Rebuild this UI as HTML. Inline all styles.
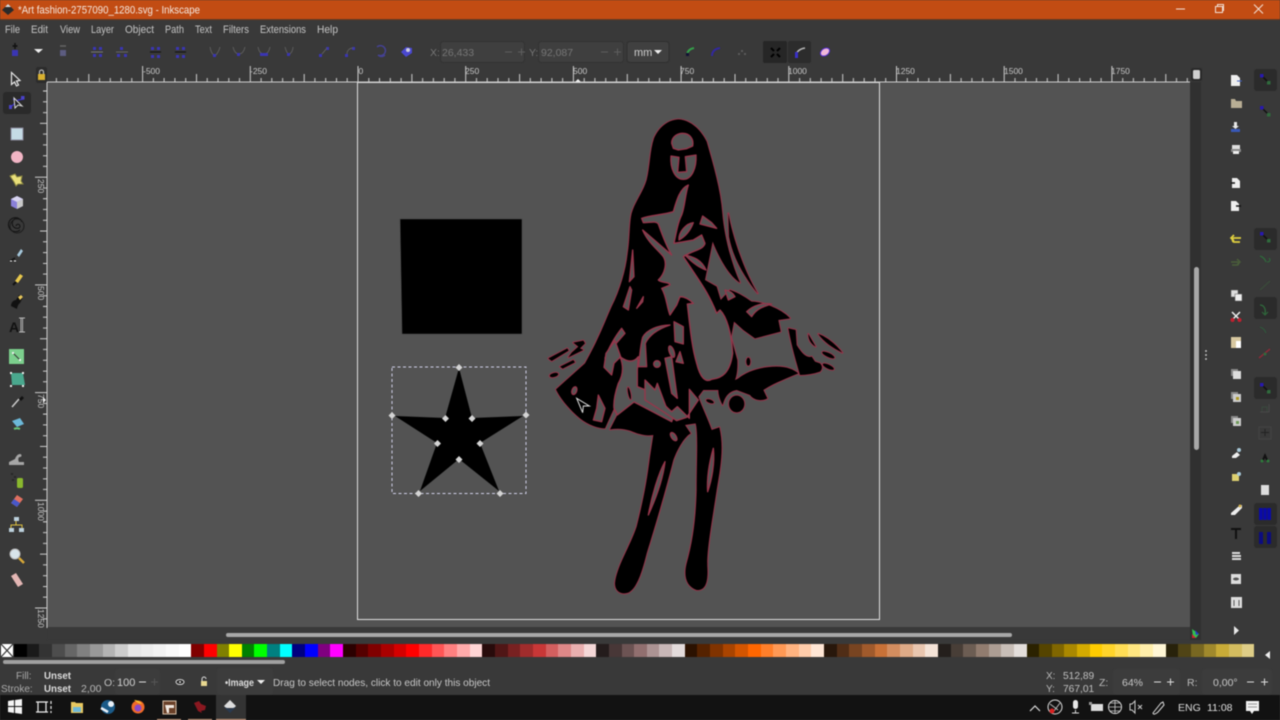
<!DOCTYPE html>
<html><head><meta charset="utf-8"><title>Inkscape</title>
<style>
html,body{margin:0;padding:0;width:1280px;height:720px;overflow:hidden;background:#393939}
#root{position:relative;width:1280px;height:720px;overflow:hidden;filter:blur(.45px)}
svg{position:absolute;left:0;top:0}
text{font-family:"Liberation Sans",sans-serif;font-size:11px;fill:#c8c8c8}
.m text{font-size:11px;fill:#c4c4c4}
.r text{font-size:8.5px;fill:#c8c8c8}
.d text{fill:#767676;font-size:10.5px}
#pal{position:absolute;left:14px;top:644px;width:1241px;height:13px;display:flex}
#pal i{flex:1;display:block}
</style></head><body><div id="root">
<svg width="1280" height="720" viewBox="0 0 1280 720">
<defs>
<pattern id="tx" patternUnits="userSpaceOnUse" x="357.5" y="66" width="107.7" height="16">
<path d="M.5 0V16M11.3 12V16M22 12V16M32.8 12V16M43.6 12V16M54.4 8V16M65.1 12V16M75.9 12V16M86.7 12V16M97.4 12V16" stroke="#cfcfcf" stroke-width="1"/></pattern>
<pattern id="ty" patternUnits="userSpaceOnUse" x="34" y="69" width="13" height="107.7">
<path d="M1 .5H13M9 11.3H13M9 22H13M9 32.8H13M9 43.6H13M6 54.4H13M9 65.1H13M9 75.9H13M9 86.7H13M9 97.4H13" stroke="#cfcfcf" stroke-width="1"/></pattern>
<g id="fig">
<path d="M445 58C410 60 385 85 372 115C360 150 360 200 350 240C340 275 315 305 305 340C298 370 300 420 293 460C288 510 270 570 245 620C225 665 205 720 165 790L78 868C90 895 120 930 150 955C175 975 205 985 225 985L252 925L262 945L240 988C260 985 280 985 300 992C330 1005 355 1008 370 1005L360 1070C350 1150 340 1200 320 1280C300 1340 260 1400 255 1450C255 1475 275 1485 295 1478C320 1465 335 1420 350 1360C375 1280 410 1160 430 1080C445 1040 465 1010 482 1000L465 975L497 970C505 1000 500 1080 500 1170C498 1250 490 1320 470 1390C460 1430 470 1460 500 1470C525 1472 535 1450 532 1400C530 1350 545 1270 560 1170C572 1100 582 1040 568 982L545 990C535 960 515 920 505 890L520 870L565 870L600 860C615 850 624 825 622 780L603 712L612 665L640 690L675 715L752 695L745 660L780 655C760 630 700 605 665 605C650 595 630 580 600 570L572 600L560 560L525 540L548 425C570 480 600 530 630 548C600 480 582 400 577 340C572 270 550 195 530 125C510 85 480 60 445 58Z"/>
<path d="M595 340C605 400 640 510 683 580C650 540 610 480 597 410Z"/>
<path d="M520 845C560 850 600 850 625 835C650 815 690 800 740 800C770 800 790 808 805 820C770 835 730 850 700 870L712 895C695 905 670 900 660 885L620 870C595 875 585 890 578 915C570 900 565 885 565 870L520 870Z"/>
<ellipse cx="620" cy="912" rx="23" ry="25"/>
<ellipse cx="655" cy="785" rx="6" ry="12"/>
<ellipse cx="522" cy="790" rx="6" ry="20" transform="rotate(-15 522 790)"/>
<ellipse cx="540" cy="904" rx="12" ry="5" transform="rotate(20 540 904)"/>
<path d="M775 685L797 690L800 735C815 760 830 775 845 770L855 785L870 790C880 800 875 810 870 815C850 822 830 825 810 825C800 790 785 740 775 685Z"/>
<path d="M865 702C890 710 920 735 937 758C910 745 880 725 865 702ZM835 702L857 740C840 730 835 715 835 702Z"/>
<ellipse cx="895" cy="765" rx="20" ry="6" transform="rotate(25 895 765)"/>
<ellipse cx="895" cy="800" rx="18" ry="6" transform="rotate(25 895 800)"/>
<path d="M55 775L112 745L116 752L65 783Z"/>
<path d="M130 728L160 722L165 730L150 745L160 750L115 772L125 758L145 740Z"/>
<path d="M90 800L130 780L135 787L98 806Z"/>
<ellipse cx="72" cy="825" rx="13" ry="6" transform="rotate(-15 72 825)"/>
</g>
<g id="holes">
<path d="M425 130C425 108 445 100 458 100C480 100 492 118 488 138L470 146L445 150L430 145ZM423 168L447 172L443 217L470 215L466 170L498 165C500 205 485 238 460 238C435 238 420 205 423 168Z"/>
<path d="M475 255C450 265 440 300 430 335C400 345 360 345 335 355L340 368C360 368 378 362 385 372C395 400 410 440 425 465L338 390C355 430 385 450 400 470C412 490 405 520 385 540C395 550 420 545 420 555L395 565C410 590 410 620 420 645L440 615L450 590C465 590 480 600 490 610L472 612C480 680 485 740 500 790C510 830 525 850 545 838C575 835 600 820 608 760C605 700 590 650 570 630L560 640C540 590 520 560 500 530L460 470C490 450 520 450 525 430L515 405L490 420L432 430C440 390 445 365 455 345C465 320 465 285 475 255Z"/>
<path d="M490 368C470 370 445 395 447 420C465 410 480 395 490 368Z"/>
<path d="M518 348L510 372L560 385L545 368Z"/>
<path d="M465 465C490 470 515 480 528 510C500 500 480 480 465 465Z"/>
<path d="M308 450L298 545L312 530Z"/>
<path d="M300 560L280 620L295 630L305 570Z"/>
<path d="M340 590L320 625L338 605Z"/>
<path d="M585 570C600 572 610 580 615 590L595 600Z"/>
<path d="M650 635C670 615 700 608 725 612C700 620 680 625 665 650Z"/>
<path d="M275 685L285 700L250 740L225 775C235 745 255 710 275 685Z"/>
<path d="M338 712C350 690 385 675 420 675C390 685 360 700 346 730L350 800L325 800C330 770 330 740 338 712Z"/>
<path d="M432 665L460 680L460 732L435 725Z"/>
<ellipse cx="425" cy="755" rx="7" ry="18" transform="rotate(-20 425 755)"/>
<path d="M450 755L460 790L438 785Z"/>
<circle cx="381" cy="792" r="10"/>
<path d="M255 722L272 770L252 790L245 825L222 802L228 760Z"/>
<path d="M270 770C282 800 280 825 265 850C255 880 250 905 252 925L262 945L312 906C350 925 385 945 425 965L432 945L372 880L322 860L322 810L325 770C310 790 290 785 270 770Z"/>
<path d="M405 775L425 770L442 895L425 880Z"/>
<path d="M345 840L375 870L382 850L408 920L425 935L442 920L478 955L478 868L505 900L470 952L440 962L400 935L345 900Z"/>
<ellipse cx="133" cy="872" rx="7" ry="12" transform="rotate(20 133 872)"/>
<path d="M205 885L225 925L215 965L190 960L200 925Z"/>
<ellipse cx="431" cy="1010" rx="7" ry="14" transform="rotate(-35 431 1010)"/>
<path d="M405 1085C385 1120 365 1190 355 1245C380 1190 400 1130 405 1085Z"/>
<path d="M550 1045C540 1080 530 1130 533 1175C545 1140 555 1090 550 1045Z"/>
</g>
</defs>

<!-- title bar -->
<rect width="1280" height="19" fill="#c24c13"/>
<rect y="19" width="1280" height="1" fill="#6b3a1e"/>
<path d="M2 10l6-6 6 6-6 5z" fill="#2a2a2a"/><path d="M5 7l3-3 3 3z" fill="#ddd"/>
<text x="18" y="13.5" textLength="182" lengthAdjust="spacingAndGlyphs" style="font-size:11px;fill:#f4e7df">*Art fashion-2757090_1280.svg - Inkscape</text>
<path d="M1176 9h9" stroke="#f2e2d8"/><path d="M1215.500 6.500h7v6h-7zM1217.500 6.500v-2h6v6h-1" fill="none" stroke="#f2e2d8"/><path d="M1254 4.500l9 9m0-9l-9 9" stroke="#f2e2d8"/>

<!-- menu -->
<g class="m">
<text x="5" y="33" textLength="15" lengthAdjust="spacingAndGlyphs">File</text><text x="31" y="33" textLength="17" lengthAdjust="spacingAndGlyphs">Edit</text><text x="60" y="33" textLength="20" lengthAdjust="spacingAndGlyphs">View</text><text x="91" y="33" textLength="23" lengthAdjust="spacingAndGlyphs">Layer</text><text x="125" y="33" textLength="29" lengthAdjust="spacingAndGlyphs">Object</text><text x="165" y="33" textLength="19" lengthAdjust="spacingAndGlyphs">Path</text><text x="195" y="33" textLength="17" lengthAdjust="spacingAndGlyphs">Text</text><text x="223" y="33" textLength="26" lengthAdjust="spacingAndGlyphs">Filters</text><text x="260" y="33" textLength="46" lengthAdjust="spacingAndGlyphs">Extensions</text><text x="317" y="33" textLength="21" lengthAdjust="spacingAndGlyphs">Help</text>
</g>

<!-- node toolbar icons -->
<g fill="#3a35b4" stroke="none">
<rect x="12" y="50" width="6" height="6"/><path d="M15 43v6M12.500 46h5" stroke="#111" stroke-width="1.500"/>
<rect x="60" y="50" width="6" height="6" fill="#5c5c80"/><path d="M60 46h6" stroke="#666" stroke-width="1.500"/>
<path d="M34 49h9l-4.500 4z" fill="#eee"/>
<path d="M93 47h3v3h-3zM99 47h3v3h-3zM93 54h3v3h-3zM99 54h3v3h-3z"/><path d="M91 52h12" stroke="#777"/>
<path d="M120 47h3v3h-3zM117 54h3v3h-3zM124 54h3v3h-3z"/><path d="M116 52h12" stroke="#666"/>
<path d="M151 47h3v3h-3zM157 47h3v3h-3zM151 55h3v3h-3zM157 55h3v3h-3z"/><path d="M150 52h11" stroke="#111"/>
<path d="M176 47h3v3h-3zM182 47h3v3h-3zM176 55h3v3h-3zM182 55h3v3h-3z"/><path d="M175 52h11" stroke="#111"/>
<g fill="none" stroke="#5c5c5c" stroke-width="1"><path d="M210 47c1 6 3 8 5 9c2-2 4-5 5-9M233 47c1 4 3 7 6 7s5-3 6-7M258 47c1 5 3 7 6 7s5-2 6-7M285 47c1 4 2 6 4 8c2-2 4-4 4-8"/></g>
<path d="M213 54h3v3h-3zM237 53h3v3h-3zM260 53h8v3h-8zM287 53h3v3h-3z"/>
<path d="M319 54h3v3h-3zM326 47h3v3h-3zM345 54h3v3h-3zM352 47h3v3h-3z"/>
<path d="M322 54l5-6M347 54c0-4 3-6 6-6" stroke="#5c5c5c" fill="none"/>
<path d="M377 47a5 5 0 1 1 1 8c2 2 5 2 7 0" fill="none" stroke="#454294" stroke-width="1.500"/>
<path d="M401 52l5-5 6 1 0 5-6 4z" fill="#4a48d0"/><circle cx="408" cy="50" r="2" fill="#ccd"/>
</g>

<!-- coord fields -->
<g fill="#3f3f3f" stroke="#333"><rect x="440.500" y="41.500" width="84" height="21" rx="3"/><rect x="538.500" y="41.500" width="85" height="21" rx="3"/></g>
<rect x="627" y="41.500" width="42" height="21" rx="3" fill="#404040" stroke="#303030"/>
<g class="d">
<text x="430" y="56">X:</text><text x="442" y="56">26,433</text><text x="529" y="56">Y:</text><text x="541" y="56">92,087</text>
</g>
<path d="M505 52h7M518 52h7M601 52h7M614 52h7M521.500 48.500v7M617.500 48.500v7" stroke="#5e5e5e"/>
<text x="634" y="56" style="font-size:11px;fill:#d0d0d0">mm</text>
<path d="M654 50h8l-4 4z" fill="#eee"/>
<path d="M687 56c0-4 2-7 7-8" fill="none" stroke="#35a04a" stroke-width="2"/><path d="M686 53h3v3h-3z" fill="#113"/>
<path d="M712 56c0-4 2-7 8-8" fill="none" stroke="#3228a0" stroke-width="2"/>
<path d="M738 53h2v2h-2zM744 53h2v2h-2zM741 50h2v2h-2z" fill="#5c5c5c"/>
<rect x="763" y="41" width="24" height="22" rx="2" fill="#262626"/><rect x="788" y="41" width="23" height="22" rx="2" fill="#2c2c2c"/>
<path d="M771 48l3 3m3 0l3-3m-9 9l3-3m3 0l3 3" stroke="#000" stroke-width="2"/>
<path d="M796 57c0-5 3-8 9-9" fill="none" stroke="#bbb" stroke-width="1.500"/><path d="M795 52h3v6h-3z" fill="#3a30c8"/>
<ellipse cx="825" cy="52" rx="5" ry="3.500" transform="rotate(-35 825 52)" fill="#f0b8d8" stroke="#5830d8"/>

<!-- canvas -->
<rect x="47" y="82" width="1143" height="545" fill="#535353"/>
<rect x="47" y="627" width="1143" height="13" fill="#393939"/>
<rect x="357.500" y="82.500" width="522" height="537" fill="none" stroke="#e0e0e0" stroke-width="1"/>

<!-- rulers -->
<rect x="47" y="66" width="1143" height="16" fill="url(#tx)"/>
<rect x="47" y="81.500" width="1143" height="1" fill="#d0d0d0"/>
<rect x="34" y="82" width="13" height="545" fill="url(#ty)"/>
<rect x="46.500" y="82" width="1" height="546" fill="#cfcfcf"/>
<g class="r">
<text x="143" y="74">-500</text><text x="250" y="74">-250</text><text x="358.500" y="74">0</text><text x="465" y="74">250</text><text x="573" y="74">500</text><text x="680" y="74">750</text><text x="788" y="74">1000</text><text x="896" y="74">1250</text><text x="1004" y="74">1500</text><text x="1111" y="74">1750</text>
<text transform="translate(38 179) rotate(90)">250</text><text transform="translate(38 286) rotate(90)">500</text><text transform="translate(38 394) rotate(90)">750</text><text transform="translate(38 502) rotate(90)">1000</text><text transform="translate(38 609) rotate(90)">1250</text>
</g>
<path d="M575 82l3-3 3 3z" fill="#eee"/><path d="M43 397l3 3-3 3z" fill="#eee"/>

<!-- lock + corner -->
<rect x="36" y="67" width="11" height="16" rx="2" fill="#2c2c2c"/>
<rect x="38" y="74" width="7" height="6" fill="#d8b030"/><path d="M39.500 74v-2a2 2 0 0 1 4 0v2" fill="none" stroke="#bbb" stroke-width="1.200"/>
<rect x="1191" y="68" width="11" height="13" rx="2" fill="#2a2a2a"/><rect x="1193" y="70" width="7" height="9" rx="1.500" fill="#cfcfcf"/>

<!-- black shapes -->
<path d="M400 219L522 219V334H402Z" fill="#000" stroke="#484848" stroke-width=".6"/>
<path d="M459 368L472 418L523 416L480 443L499 491L459 459L420 491L437 443L395 416L445 418Z" fill="#000"/>
<rect x="392" y="367" width="134" height="126.500" fill="none" stroke="#d0d0e8" stroke-width="1" stroke-dasharray="3 2.500"/>
<g fill="#d4d4d4"><path d="M459 364l3.500 3.500-3.500 3.500-3.500-3.500zM392 412l3.500 3.500-3.500 3.500-3.500-3.500zM526 411.500l3.500 3.500-3.500 3.500-3.500-3.500zM418.500 490l3.500 3.500-3.500 3.500-3.500-3.500zM500 490l3.500 3.500-3.500 3.500-3.500-3.500zM445.500 415l3.500 3.500-3.500 3.500-3.500-3.500zM472 415l3.500 3.500-3.500 3.500-3.500-3.500zM437.500 440l3.500 3.500-3.500 3.500-3.500-3.500zM480 440l3.500 3.500-3.500 3.500-3.500-3.500zM459 456l3.500 3.500-3.500 3.500-3.500-3.500z"/></g>

<!-- figure -->
<g transform="translate(530 100) scale(.33333)">
<use href="#fig" fill="#96364b" stroke="#96364b" stroke-width="6" stroke-linejoin="round"/>
<use href="#fig" fill="#000"/>
<use href="#holes" fill="#555" stroke="#96364b" stroke-width="4" stroke-linejoin="round"/>
<ellipse cx="298" cy="880" rx="5" ry="20" transform="rotate(-12 298 880)" fill="#000" stroke="#96364b" stroke-width="3"/>
<path d="M140 895L178 918L160 918L158 938Z" fill="none" stroke="#ddd" stroke-width="3"/>
</g>

<!-- left tools -->
<rect x="3" y="92" width="28" height="22" rx="3" fill="#2a2a2a"/>
<path d="M11.500 72.500v12l3-2.500 2 4 2-1-2-4 3.500-.5z" fill="#333" stroke="#e8e8e8" stroke-width="1.200"/>
<path d="M11 107l7-7 6-1M13 99l3 2" stroke="#3a30d0" stroke-width="1.200" fill="none"/><rect x="9" y="105" width="3" height="4" fill="#4a42c8"/><rect x="21" y="96" width="3.500" height="3.500" fill="#4a42c8"/>
<path d="M14 98l1 10 3-3 4 1z" fill="#222" stroke="#ddd"/>
<rect x="11" y="128" width="12" height="12" fill="#c5dbe5" stroke="#889"/>
<circle cx="17" cy="157" r="6" fill="#f2b5c5"/>
<path d="M10 176l5-2 2 3 5-1-1 5 2 3-5 0-2 2-2-4z" fill="#e9df7a" stroke="#8b8741"/>
<path d="M17 196l6 3v7l-6 3-6-3v-7z" fill="#8a80d8"/><path d="M17 196l6 3-6 3-6-3z" fill="#d8d4f0"/><path d="M17 202l6-3v7l-6 3z" fill="#c9c9c9"/>
<path d="M17 226m-1 0a2 2 0 1 1 3 2a5 5 0 1 1 3-6a7 7 0 1 0-2 8" fill="none" stroke="#111" stroke-width="1"/><circle cx="17" cy="226" r="7" fill="none" stroke="#1c1c1c"/>
<path d="M17 255l4-6 2 2-4 6z" fill="#a5c8dc"/><path d="M10 261l5-3" stroke="#111" stroke-width="1.500"/><path d="M10 261h2M14 261h2" stroke="#fff"/>
<path d="M15 281l5-7 3 2-5 7z" fill="#e8c84c"/><path d="M13 285l3-3" stroke="#111" stroke-width="2"/>
<path d="M11 306c0-4 3-6 5-6l3-5 4 2-3 6c-2 1-3 5-3 6z" fill="#111"/><path d="M18 297l3-2 2 2-3 3z" fill="#e6c65c"/>
<text x="9" y="332" style="font-family:'Liberation Sans';font-size:14px;fill:#111;font-weight:bold">A</text><path d="M21 318h1.500v14H21zM19 318h6M19 332h6" stroke="#bbb" stroke-width="1"/>
<rect x="9" y="349" width="15" height="15" fill="#7ccf8d"/><path d="M13 353l7 7" stroke="#333"/><rect x="12" y="352" width="2" height="2" fill="#eee"/><rect x="19" y="359" width="2" height="2" fill="#eee"/>
<path d="M11 373h12l2 12h-13z" fill="#4aa88e"/><g fill="#eee"><rect x="10" y="372" width="2" height="2"/><rect x="22" y="372" width="2" height="2"/><rect x="10" y="385" width="2" height="2"/><rect x="22" y="385" width="2" height="2"/></g>
<path d="M12 407l7-8" stroke="#ccc" stroke-width="1.500"/><path d="M19 399l3-3 2 2-3 3z" fill="#111"/>
<path d="M12 421l8-3 4 6-7 3z" fill="#6cb8d8"/><path d="M14 429c2-1 4-1 6 0" stroke="#6cc878" stroke-width="2" fill="none"/>
<path d="M9 465v-3l6-3c1-3 3-5 5-5s2 3 0 3-2 3-1 5h5v3z" fill="#a6a6a6"/>
<rect x="17" y="478" width="6" height="10" rx="1.500" fill="#8ab82e"/><path d="M11 474h2M14 477h2M12 480h2" stroke="#222" stroke-width="1.500"/>
<path d="M11 503l6-8 6 4-6 8z" fill="#e07060"/><path d="M11 503l3-4 6 4-3 4z" fill="#4858c8"/>
<g fill="#bcd0dc"><rect x="14" y="517" width="5" height="4"/><rect x="9" y="528" width="5" height="4"/><rect x="19" y="528" width="5" height="4"/></g><path d="M16 521v4h-5v3M16 525h6v3" stroke="#ddc040" fill="none"/>
<circle cx="15" cy="554" r="5" fill="#d8e4ea" stroke="#bbb"/><path d="M19 558l5 5" stroke="#d8a838" stroke-width="2.500"/>
<path d="M11 576l5-3 7 11-5 3z" fill="#e3b6b4"/>

<!-- scrollbars -->
<rect x="1190" y="82" width="11" height="558" fill="#303030"/>
<rect x="1194" y="267" width="5" height="183" rx="2.500" fill="#a8a8a8"/>
<rect x="226" y="633" width="786" height="4" rx="2" fill="#a8a8a8"/>
<circle cx="1206" cy="351" r=".9" fill="#ddd"/><circle cx="1206" cy="355" r=".9" fill="#ddd"/><circle cx="1206" cy="359" r=".9" fill="#ddd"/>
<path d="M1192 629l7 5-3 4-3-1z" fill="#33c050"/><path d="M1192 634l4 4h-4z" fill="#d02030"/><path d="M1195 630l4 4-3 1z" fill="#2838c8"/>

<!-- right col 1 -->
<g>
<path d="M1231 75h6l3 3v8h-9z" fill="#eee"/><path d="M1237 81h5" stroke="#4060c0"/>
<path d="M1231 99h4l1 2h6v7h-11z" fill="#b8ae94"/>
<path d="M1234 122h3v4h2l-3.500 3-3.500-3h2z" fill="#e8e8e8"/><rect x="1231" y="129" width="9" height="3" fill="#3858b8"/>
<rect x="1232" y="145" width="8" height="4" fill="#ddd"/><rect x="1231" y="149" width="10" height="3" fill="#888"/><rect x="1233" y="151" width="6" height="3" fill="#eee"/>
<path d="M1232 178h5l3 3v7h-8z" fill="#eee"/><path d="M1231 183h4" stroke="#111" stroke-width="1.500"/>
<path d="M1231 201h5l3 3v7h-8z" fill="#eee"/><path d="M1236 206h5" stroke="#111" stroke-width="1.500"/>
<path d="M1240 242h-6c-2 0-2-4 0-4h7M1234 235l-3 3 3 3" fill="none" stroke="#e0d040" stroke-width="1.700"/>
<path d="M1232 265h5c2 0 2-3 0-3h-6M1237 259l3 3-3 3" fill="none" stroke="#4a5e3a" stroke-width="1.500"/>
<rect x="1231" y="290" width="7" height="7" fill="#ddd" stroke="#555" stroke-width=".5"/><rect x="1235" y="294" width="7" height="7" fill="#eee" stroke="#555" stroke-width=".5"/>
<path d="M1232 312l7 7M1240 312l-7 7" stroke="#eee" stroke-width="1.500"/><circle cx="1232.500" cy="320" r="2" fill="#c02030"/><circle cx="1239.500" cy="320" r="2" fill="#c02030"/>
<rect x="1231" y="337" width="10" height="11" fill="#d8c8a0"/><rect x="1236" y="341" width="5" height="7" fill="#fff"/>
<rect x="1231" y="369" width="7" height="7" fill="#888"/><rect x="1233" y="371" width="8" height="8" fill="#ddd"/>
<rect x="1231" y="392" width="7" height="7" fill="#888"/><rect x="1233" y="394" width="8" height="8" fill="#ccc"/><rect x="1236" y="397" width="3" height="3" fill="#ae9a28"/>
<rect x="1231" y="416" width="7" height="7" fill="#888"/><rect x="1233" y="418" width="8" height="8" fill="#ccc"/><rect x="1236" y="421" width="3" height="3" fill="#6e9a58"/>
<path d="M1232 456l5-4 3 3-4 3h-4z" fill="#eee"/><circle cx="1239" cy="450" r="2" fill="#a8c8d8"/>
<rect x="1232" y="474" width="7" height="7" fill="#ddd070"/><circle cx="1239" cy="474" r="2" fill="#a8c8d8"/>
<path d="M1231 513l8-7 3-1v3l-7 7h-4z" fill="#eee"/><circle cx="1240" cy="506" r="1.500" fill="#d0b050"/>
<path d="M1231 528h10v2h-4v9h-2v-9h-4z" fill="#111"/>
<g fill="#ddd"><rect x="1232" y="552" width="8" height="2"/><rect x="1232" y="555" width="9" height="2"/><rect x="1232" y="558" width="9" height="2"/></g>
<rect x="1231" y="574" width="10" height="10" fill="#ddd"/><ellipse cx="1236" cy="579" rx="3" ry="1.500" fill="#555"/>
<rect x="1231" y="597" width="11" height="11" fill="#ddd"/><path d="M1234 600v6M1239 600v6" stroke="#555"/>
<path d="M1234 626l5 4.500-5 4.500z" fill="#e8e8e8"/>
</g>

<!-- right col 2 -->
<g fill="#2b2b2b">
<rect x="1254" y="69" width="23" height="22" rx="3"/><rect x="1254" y="228" width="23" height="22" rx="3"/><rect x="1254" y="297" width="23" height="22" rx="3"/><rect x="1254" y="377" width="23" height="22" rx="3"/><rect x="1254" y="503" width="23" height="22" rx="3"/><rect x="1254" y="526" width="23" height="22" rx="3"/>
</g>
<g>
<g id="n"><path d="M1262 76l6 6" stroke="#111" stroke-width="1.500"/><rect x="1260" y="74" width="3.500" height="3.500" fill="#2818b0"/><rect x="1267" y="81" width="3.500" height="3.500" fill="#2f6a3c"/></g>
<use href="#n" y="32"/><use href="#n" y="158"/><use href="#n" y="309"/>
<path d="M1260 256c3 1 5 3 6 6" fill="none" stroke="#2f6a3c" stroke-width="1.300"/><path d="M1267 262c3 0 4-2 2-4" fill="none" stroke="#2f6a3c"/>
<path d="M1260 290l10-9" stroke="#3a4a3a" stroke-width="1.500"/>
<path d="M1260 305c4 0 6 4 5 9" fill="none" stroke="#2f6a3c" stroke-width="1.300"/><path d="M1262 312l3 3 3-3" fill="none" stroke="#2f6a3c"/>
<path d="M1260 327c3 1 5 3 6 6" fill="none" stroke="#2f5a3c"/>
<path d="M1259 358l11-9" stroke="#8a2a38" stroke-width="1.500"/><circle cx="1265" cy="354" r="1.500" fill="#2f6a3c"/>
<rect x="1262" y="407" width="5" height="5" fill="none" stroke="#3a4a3e"/><path d="M1260 412h9v-8" fill="none" stroke="#484848"/>
<path d="M1265 429v7M1261 432.500h8" stroke="#222"/><rect x="1259" y="427" width="12" height="12" fill="none" stroke="#444"/>
<path d="M1261 462l4-9 4 9h-2l-2-4-2 4z" fill="#111"/><circle cx="1262" cy="461" r="1.500" fill="#2f7a3c"/><circle cx="1268" cy="461" r="1.500" fill="#2f7a3c"/>
<rect x="1261" y="485" width="8" height="10" fill="#ddd"/>
<rect x="1259" y="508" width="12" height="12" fill="#0a0aa8"/><path d="M1263 508v12M1267 508v12" stroke="#181870"/>
<path d="M1259 532h4v12h-4zM1267 532h4v12h-4z" fill="#0c0c80"/>
</g>

<!-- palette cross + arrow -->
<rect x="1" y="644" width="12" height="13" fill="#fff"/>
<path d="M1 644l12 13m0-13l-12 13" stroke="#333" stroke-width="1.200"/>
<path d="M1270 651v8l-5-4z" fill="#eee"/>
<rect x="3" y="660" width="282" height="4" rx="2" fill="#a0a0a0"/>

<!-- status bar -->
<text x="16" y="679" style="font-size:10px;fill:#aaa">Fill:</text>
<text x="1" y="692" style="font-size:10px;fill:#aaa">Stroke:</text>
<text x="44" y="679" textLength="27" lengthAdjust="spacingAndGlyphs" style="font-size:10.500px;font-weight:bold;fill:#ddd">Unset</text>
<text x="44" y="692" textLength="27" lengthAdjust="spacingAndGlyphs" style="font-size:10.500px;font-weight:bold;fill:#ddd">Unset</text>
<text x="81" y="692" style="font-size:10.500px;fill:#b8b8b8">2,00</text>
<rect x="115" y="669" width="45" height="26" rx="3" fill="#3c3c3c"/>
<text x="104" y="686" style="font-size:10.500px;fill:#c0c0c0">O:</text>
<text x="117" y="686" style="font-size:11px;fill:#d0d0d0">100</text>
<path d="M139 682h7" stroke="#ddd"/><path d="M151 682h7M154.500 678.500v7" stroke="#555"/>
<ellipse cx="180" cy="682" rx="4" ry="2.500" fill="#222" stroke="#ddd"/><circle cx="180" cy="682" r="1" fill="#ddd"/>
<rect x="201" y="681" width="6" height="5" fill="#e8d890"/><path d="M202 681v-2a2 2 0 0 1 4 0" fill="none" stroke="#ddd"/>
<rect x="217" y="668" width="56" height="27" rx="3" fill="#3c3c3c"/>
<text x="225" y="686" textLength="29" lengthAdjust="spacingAndGlyphs" style="font-size:10px;font-weight:bold;fill:#ddd">•Image</text>
<path d="M257 680h8l-4 4z" fill="#eee"/>
<text x="273" y="686" textLength="217" lengthAdjust="spacingAndGlyphs" style="font-size:10.500px;fill:#c8c8c8">Drag to select nodes, click to edit only this object</text>

<text x="1046" y="679" style="font-size:10px;fill:#b8b8b8">X:</text><text x="1046" y="692" style="font-size:10px;fill:#b8b8b8">Y:</text>
<text x="1063" y="679" style="font-size:10.200px;fill:#c0c0c0">512,89</text><text x="1063" y="692" style="font-size:10.200px;fill:#c0c0c0">767,01</text>
<text x="1099" y="686" style="font-size:10.500px;fill:#bbb">Z:</text>
<rect x="1113" y="669" width="67" height="26" rx="3" fill="#3c3c3c"/>
<text x="1122" y="686" style="font-size:10.500px;fill:#c8c8c8">64%</text>
<path d="M1154 682h7M1167 682h7M1170.500 678.500v7" stroke="#ddd"/>
<text x="1187" y="686" style="font-size:10.500px;fill:#bbb">R:</text>
<rect x="1202" y="669" width="70" height="26" rx="3" fill="#3c3c3c"/>
<text x="1213" y="686" style="font-size:10.500px;fill:#c8c8c8">0,00°</text>
<path d="M1247 682h7M1261 682h7M1264.500 678.500v7" stroke="#ddd"/>

<!-- taskbar -->
<rect y="695" width="1280" height="25" fill="#121212"/>
<rect x="216" y="695" width="30" height="25" fill="#333"/>
<rect x="157" y="719" width="24" height="1" fill="#d8a888"/><rect x="188" y="719" width="24" height="1" fill="#d8a888"/><rect x="216" y="719" width="30" height="1" fill="#e0a888"/>
<path d="M8 701l6-1v6H8zM15 700l7-1v7h-7zM8 707h6v6l-6-1zM15 707h7v7l-7-1z" fill="#f4f4f4"/>
<path d="M38 702h8v10h-8zM36 702h12M36 712h12M51 701v3M51 706v3M51 711v2" fill="none" stroke="#eee" stroke-width="1.200"/>
<path d="M71 702h4l1 1h7v10H71z" fill="#e8c860"/><rect x="73" y="707" width="8" height="5" fill="#6eb8d8"/>
<circle cx="108" cy="707" r="7" fill="#1a5a88"/><circle cx="111" cy="704" r="3" fill="#e8f0f8"/><path d="M101 708l7 4" stroke="#e8f0f8" stroke-width="2.500"/>
<circle cx="138" cy="707" r="6.500" fill="#f06a28"/><circle cx="138" cy="708" r="3.500" fill="#8a4ac8"/><path d="M134 700c3 0 6 1 8 4l-4-1z" fill="#f8c030"/>
<rect x="163" y="701" width="13" height="13" fill="#6a4028" stroke="#d8c0a8"/><path d="M165 705h9v3h-5v5h-2z" fill="#f0e8e0"/>
<path d="M194 703l5-2 2 3 5 2-1 4-4 1 1 2-4-2-2-4z" fill="#8a1820"/>
<path d="M230 700l6 6-2 2h-8l-2-2z" fill="#ddd"/><path d="M224 707l6 6 6-6-6 2z" fill="#2a3a50"/>

<path d="M1030 711l5-5 5 5" fill="none" stroke="#ddd" stroke-width="1.200"/>
<circle cx="1055" cy="707" r="7" fill="none" stroke="#ddd"/><path d="M1050 704l8 6M1060 703l-6 8" stroke="#bbb"/><circle cx="1052" cy="711" r="2.500" fill="#d82020"/>
<rect x="1073" y="700" width="5" height="9" rx="2.500" fill="#e8e8e8"/><path d="M1075.500 710v3M1072 713h7" stroke="#ddd"/>
<rect x="1091" y="704" width="12" height="7" fill="#ddd"/><rect x="1089" y="702" width="3" height="3" fill="#999"/>
<circle cx="1115" cy="707" r="6.500" fill="none" stroke="#ddd"/><path d="M1108.500 707h13M1115 700.500v13M1110 703h10M1110 711h10" stroke="#ccc" stroke-width=".8"/>
<path d="M1130 704h2l3-3v12l-3-3h-2zM1138 705l4 4m0-4l-4 4" fill="none" stroke="#ccc"/>
<path d="M1153 713l8-10 2-1 1 3-6 7c-2 2-5 3-5 1z" fill="none" stroke="#ddd"/>
<text x="1178" y="711" style="font-size:10.500px;fill:#ddd">ENG</text>
<text x="1207" y="711" style="font-size:10.500px;fill:#e0e0e0">11:08</text>
<path d="M1246 701h13v10h-5l-2 3-2-3h-4z" fill="#f2f2f2"/><path d="M1248 704h9M1248 707h9" stroke="#777" stroke-width=".8"/>
</svg>

<div id="pal">
<i style="background:#000"></i><i style="background:#1a1a1a"></i><i style="background:#333"></i><i style="background:#4d4d4d"></i><i style="background:#666"></i><i style="background:#808080"></i><i style="background:#999"></i><i style="background:#b3b3b3"></i><i style="background:#ccc"></i><i style="background:#e6e6e6"></i><i style="background:#ececec"></i><i style="background:#f2f2f2"></i><i style="background:#f9f9f9"></i><i style="background:#fff"></i>
<i style="background:#800000"></i><i style="background:#f00"></i><i style="background:#808000"></i><i style="background:#ff0"></i><i style="background:#008000"></i><i style="background:#0f0"></i><i style="background:#008080"></i><i style="background:#0ff"></i><i style="background:#000080"></i><i style="background:#00f"></i><i style="background:#800080"></i><i style="background:#f0f"></i>
<i style="background:#2b0000"></i><i style="background:#500"></i><i style="background:#800000"></i><i style="background:#a00"></i><i style="background:#d40000"></i><i style="background:#f00"></i><i style="background:#ff2a2a"></i><i style="background:#f55"></i><i style="background:#ff8080"></i><i style="background:#faa"></i><i style="background:#ffd5d5"></i>
<i style="background:#280b0b"></i><i style="background:#501616"></i><i style="background:#782121"></i><i style="background:#a02c2c"></i><i style="background:#c83737"></i><i style="background:#d35f5f"></i><i style="background:#de8787"></i><i style="background:#e9afaf"></i><i style="background:#f4d7d7"></i>
<i style="background:#241c1c"></i><i style="background:#483737"></i><i style="background:#6c5353"></i><i style="background:#916f6f"></i><i style="background:#ac9393"></i><i style="background:#c8b7b7"></i><i style="background:#e3dbdb"></i>
<i style="background:#2b1100"></i><i style="background:#520"></i><i style="background:#803300"></i><i style="background:#a40"></i><i style="background:#d45500"></i><i style="background:#f60"></i><i style="background:#ff7f2a"></i><i style="background:#f95"></i><i style="background:#ffb380"></i><i style="background:#fca"></i><i style="background:#ffe6d5"></i>
<i style="background:#28170b"></i><i style="background:#502d16"></i><i style="background:#784421"></i><i style="background:#a05a2c"></i><i style="background:#c87137"></i><i style="background:#d38d5f"></i><i style="background:#deaa87"></i><i style="background:#e9c6af"></i><i style="background:#f4e3d7"></i>
<i style="background:#241f1c"></i><i style="background:#483e37"></i><i style="background:#6c5d53"></i><i style="background:#917c6f"></i><i style="background:#ac9d93"></i><i style="background:#c8beb7"></i><i style="background:#e3dedb"></i>
<i style="background:#2b2200"></i><i style="background:#540"></i><i style="background:#806600"></i><i style="background:#a80"></i><i style="background:#d4aa00"></i><i style="background:#fc0"></i><i style="background:#ffd42a"></i><i style="background:#fd5"></i><i style="background:#ffe680"></i><i style="background:#fea"></i><i style="background:#fff6d5"></i>
<i style="background:#28220b"></i><i style="background:#504416"></i><i style="background:#786721"></i><i style="background:#a0892c"></i><i style="background:#c8ab37"></i><i style="background:#d3bc5f"></i><i style="background:#decd87"></i>
</div>
</div></body></html>
